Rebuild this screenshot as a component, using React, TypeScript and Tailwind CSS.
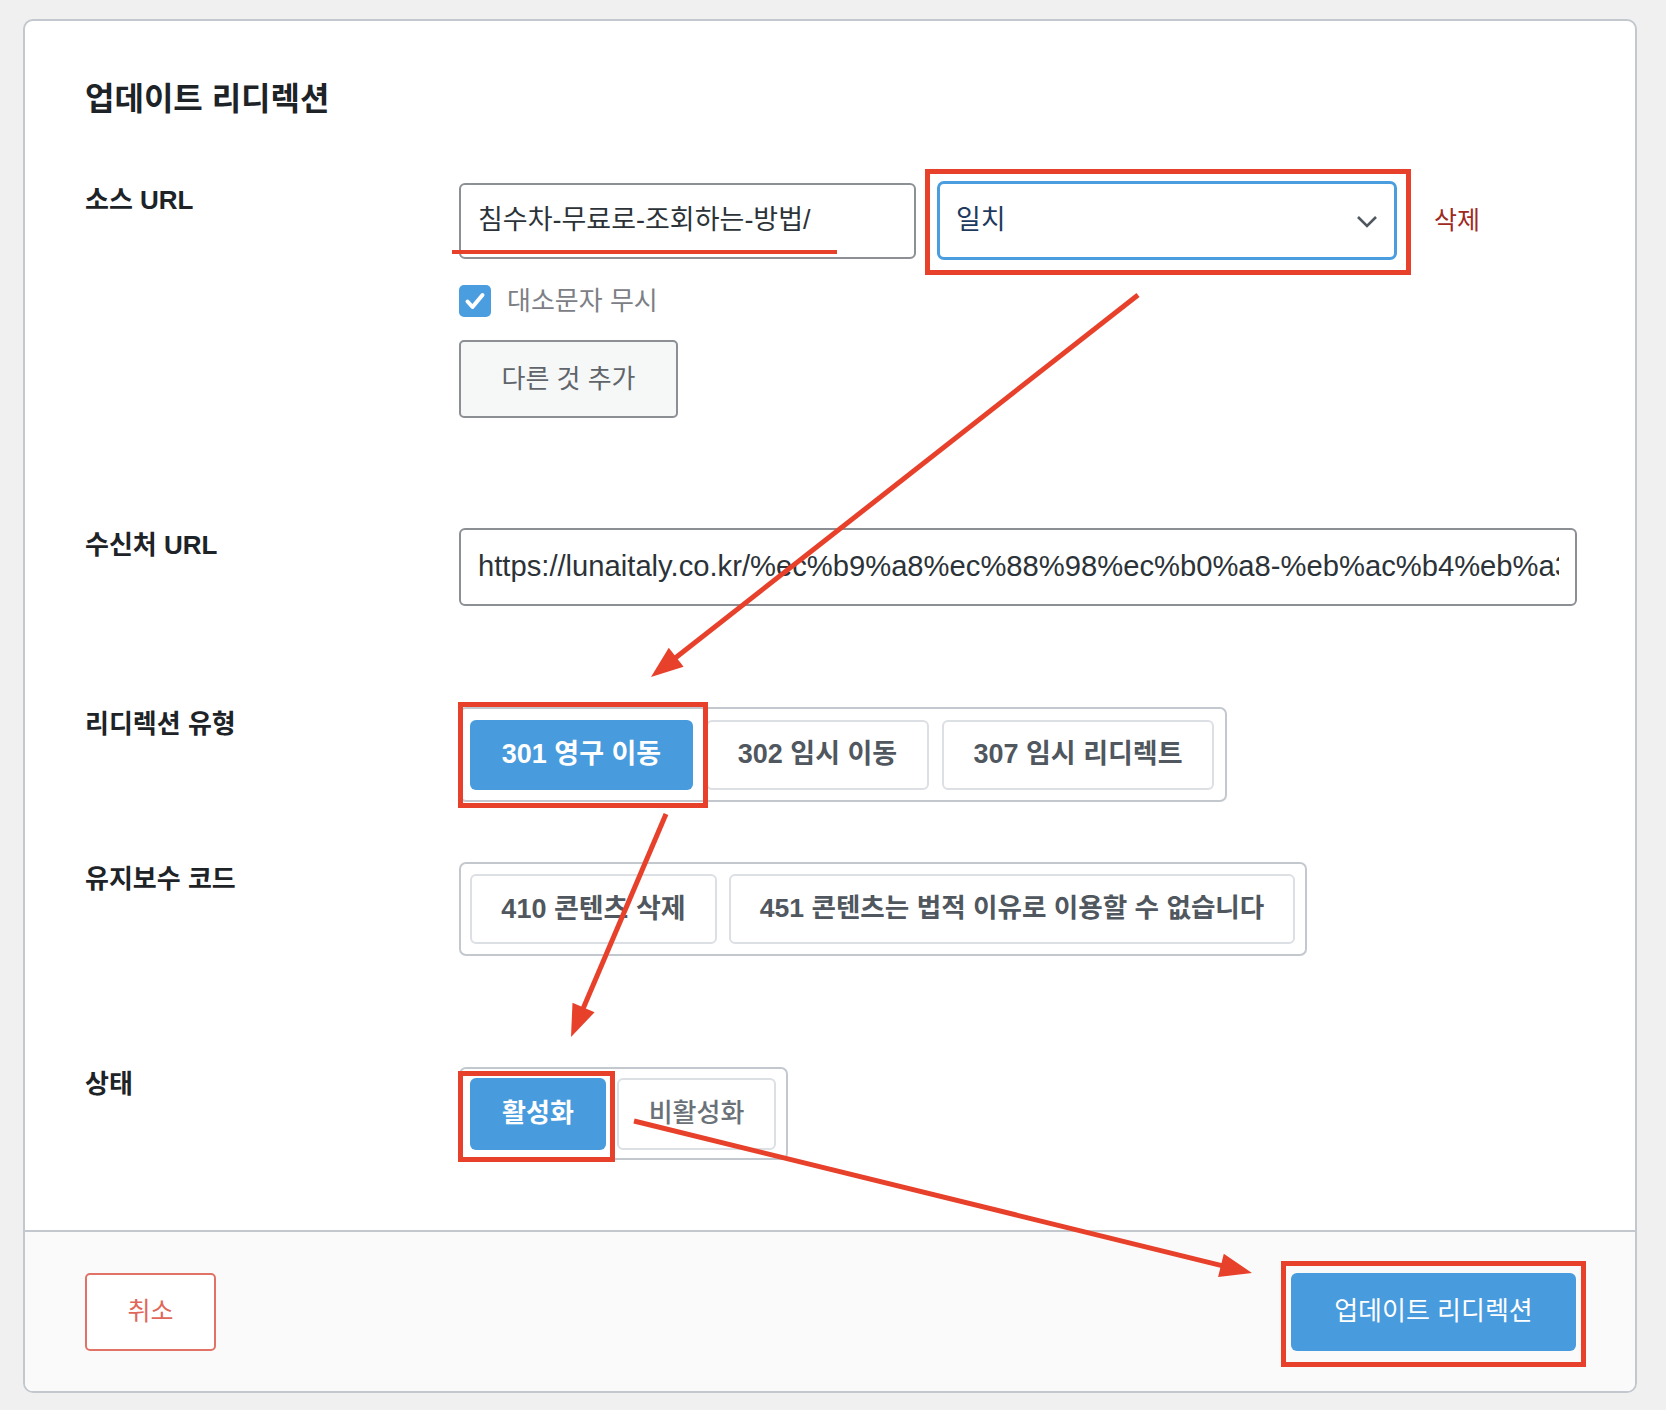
import React from 'react';

const RED = '#e8412b';

function Arrow({ x1, y1, x2, y2 }: { x1: number; y1: number; x2: number; y2: number }) {
  const dx = x2 - x1;
  const dy = y2 - y1;
  const len = Math.hypot(dx, dy);
  const ux = dx / len;
  const uy = dy / len;
  const head = 32;
  const half = 12;
  const bx = x2 - ux * head;
  const by = y2 - uy * head;
  const pts = `${x2},${y2} ${bx - uy * half},${by + ux * half} ${bx + uy * half},${by - ux * half}`;
  return (
    <g>
      <line x1={x1} y1={y1} x2={bx + ux * 4} y2={by + uy * 4} stroke={RED} strokeWidth={5} />
      <polygon points={pts} fill={RED} />
    </g>
  );
}

function Annotations() {
  return (
    <svg className="absolute inset-0 pointer-events-none" width={1666} height={1410}>
      {/* underline under source text */}
      <line x1={452} y1={252} x2={837} y2={252} stroke={RED} strokeWidth={4} />
      {/* boxes */}
      <rect x={927.5} y={171.5} width={481} height={101} fill="none" stroke={RED} strokeWidth={5} />
      <rect x={460.5} y={704.5} width={245} height={101} fill="none" stroke={RED} strokeWidth={5} />
      <rect x={460.5} y={1073.5} width={152} height={86} fill="none" stroke={RED} strokeWidth={5} />
      <rect x={1283.5} y={1263.5} width={300} height={101} fill="none" stroke={RED} strokeWidth={5} />
      {/* arrows */}
      <Arrow x1={1138} y1={295} x2={651} y2={677} />
      <Arrow x1={666} y1={814} x2={571} y2={1037} />
      <Arrow x1={634} y1={1121} x2={1252} y2={1273} />
    </svg>
  );
}

function Label({ children, lh = 'leading-[34px]' }: { children: React.ReactNode; lh?: string }) {
  return (
    <div className={`w-[374px] shrink-0 text-[26px] font-semibold text-[#1d2327] ${lh}`}>{children}</div>
  );
}

export default function App() {
  return (
    <div className="relative w-[1666px] min-h-[1410px] bg-[#f0f0f1] pt-[19px] pl-[23px] font-['Liberation_Sans','Noto_Sans_CJK_KR',sans-serif]">
      <div className="w-[1614px] h-[1374px] bg-white border-2 border-[#c3c8cf] rounded-[10px] flex flex-col overflow-hidden">
        <div className="flex-1 pl-[60px] pt-[58px]">
          <h1 className="text-[32px] leading-[40px] font-bold text-[#1d2327]">업데이트 리디렉션</h1>

          {/* 소스 URL */}
          <div className="flex mt-[62px]">
            <Label lh="leading-[38px]">소스 URL</Label>
            <div className="flex flex-col">
              <div className="flex items-center h-[79px]">
                <div className="w-[457px] h-[76px] border-2 border-[#8c8f94] rounded-[6px] flex items-center pl-[17px] text-[27px] text-[#2c3338]">
                  침수차-무료로-조회하는-방법/
                </div>
                <div className="ml-[21px] w-[460px] h-[79px] border-[3px] border-[#4a9ddf] rounded-[7px] flex items-center justify-between pl-[16px] pr-[16px] text-[27px] text-[#1d3a5e]">
                  <span>일치</span>
                  <svg width="22" height="14" viewBox="0 0 22 14">
                    <path d="M2 3l9 9 9-9" fill="none" stroke="#50575e" strokeWidth="2.6" />
                  </svg>
                </div>
                <span className="ml-[37px] text-[25px] text-[#a02a1e]">삭제</span>
              </div>
              <label className="flex items-center mt-[25px] h-[32px]">
                <span className="w-[32px] h-[32px] rounded-[5px] bg-[#4a9ddf] flex items-center justify-center">
                  <svg width="24" height="24" viewBox="0 0 24 24">
                    <path d="M4.5 12.5l5 5.5 10-12" fill="none" stroke="#fff" strokeWidth="4" strokeLinecap="round" strokeLinejoin="round" />
                  </svg>
                </span>
                <span className="ml-[16px] text-[26px] text-[#7c8086]">대소문자 무시</span>
              </label>
              <button className="mt-[23px] w-[219px] h-[78px] border-2 border-[#8c8f94] rounded-[5px] bg-[#f6f7f7] text-[26px] text-[#5f656b]">
                다른 것 추가
              </button>
            </div>
          </div>

          {/* 수신처 URL */}
          <div className="flex mt-[110px]">
            <Label>수신처 URL</Label>
            <div className="w-[1118px] h-[78px] border-2 border-[#8c8f94] rounded-[6px] flex items-center pl-[17px] pr-[16px] overflow-hidden whitespace-nowrap text-[29.2px] text-[#2c3338]">
              <span className="overflow-hidden">https://lunaitaly.co.kr/%ec%b9%a8%ec%88%98%ec%b0%a8-%eb%ac%b4%eb%a3%8c</span>
            </div>
          </div>

          {/* 리디렉션 유형 */}
          <div className="flex mt-[101px]">
            <Label>리디렉션 유형</Label>
            <div className="h-[95px] border-2 border-[#c3c8cf] rounded-[7px] flex items-center gap-[13px] pl-[9px] pr-[11px]">
              <div className="w-[223px] h-[70px] rounded-[6px] bg-[#489bdc] text-white text-[27px] font-semibold flex items-center justify-center">301 영구 이동</div>
              <div className="w-[223px] h-[70px] rounded-[6px] border-2 border-[#dcdfe3] text-[#50575e] text-[27px] font-semibold flex items-center justify-center">302 임시 이동</div>
              <div className="w-[272px] h-[70px] rounded-[6px] border-2 border-[#dcdfe3] text-[#50575e] text-[27px] font-semibold flex items-center justify-center">307 임시 리디렉트</div>
            </div>
          </div>

          {/* 유지보수 코드 */}
          <div className="flex mt-[60px]">
            <Label>유지보수 코드</Label>
            <div className="h-[94px] border-2 border-[#c3c8cf] rounded-[7px] flex items-center gap-[12px] pl-[9px] pr-[10px]">
              <div className="w-[247px] h-[70px] rounded-[6px] border-2 border-[#dcdfe3] text-[#50575e] text-[27px] font-semibold flex items-center justify-center">410 콘텐츠 삭제</div>
              <div className="w-[566px] h-[70px] rounded-[6px] border-2 border-[#dcdfe3] text-[#50575e] text-[26.6px] font-semibold flex items-center justify-center whitespace-nowrap">451 콘텐츠는 법적 이유로 이용할 수 없습니다</div>
            </div>
          </div>

          {/* 상태 */}
          <div className="flex mt-[111px]">
            <Label>상태</Label>
            <div className="h-[93px] border-2 border-[#c3c8cf] rounded-[7px] flex items-center gap-[11px] pl-[9px] pr-[10px]">
              <div className="w-[136px] h-[72px] rounded-[6px] bg-[#489bdc] text-white text-[26px] font-semibold flex items-center justify-center">활성화</div>
              <div className="w-[159px] h-[72px] rounded-[6px] border-2 border-[#dcdfe3] text-[#6b7178] text-[26px] font-medium flex items-center justify-center">비활성화</div>
            </div>
          </div>
        </div>

        <div className="h-[161px] border-t-2 border-[#c3c8cf] bg-[#fafafa] flex items-center justify-between pl-[60px] pr-[59px]">
          <button className="w-[131px] h-[78px] border-2 border-[#e07266] rounded-[5px] bg-white text-[25px] text-[#e0665a]">취소</button>
          <button className="w-[285px] h-[78px] rounded-[6px] bg-[#489bdc] text-[26px] text-white">업데이트 리디렉션</button>
        </div>
      </div>
      <Annotations />
    </div>
  );
}
